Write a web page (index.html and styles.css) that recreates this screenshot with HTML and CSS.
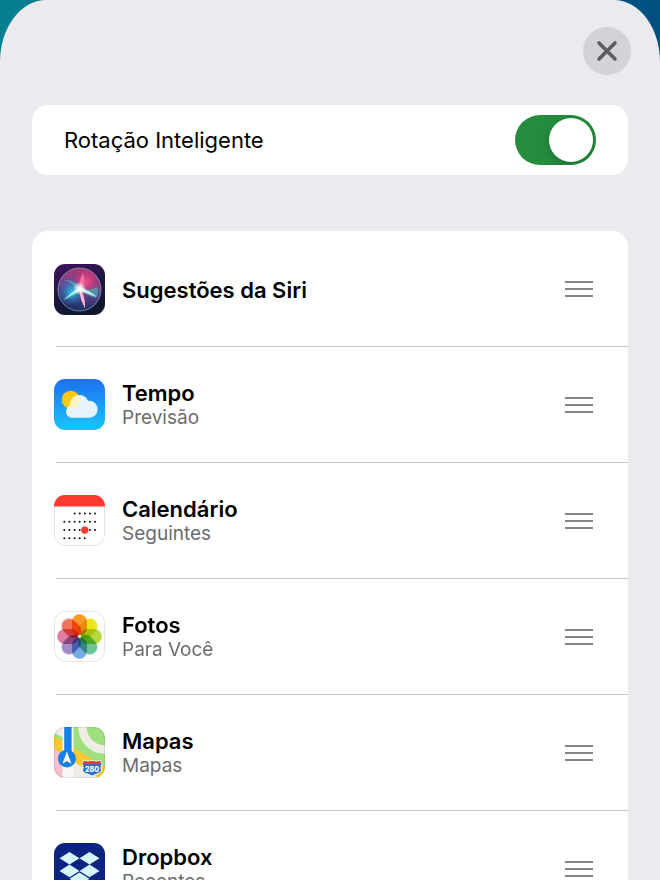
FILE: index.html
```html
<!DOCTYPE html>
<html lang="pt">

<head>
  <meta charset="UTF-8">
  <meta name="viewport" content="width=device-width, initial-scale=1.0">
  <title>Rotação Inteligente</title>
  <link rel="stylesheet" href="styles.css">
</head>

<body>
  <main class="sheet">
    <header class="sheet-header">
      <button class="close" type="button" aria-label="Fechar">
        <svg width="22" height="22" viewBox="0 0 22 22"><path d="M3 3l16 16M19 3L3 19" fill="none" stroke="#5c5c61" stroke-width="3.6" stroke-linecap="round"/></svg>
      </button>
    </header>

    <div class="card setting">
      <label for="smart-rotate">Rotação Inteligente</label>
      <input class="switch" id="smart-rotate" type="checkbox" role="switch" checked>
    </div>

    <ul class="card widgets">
      <li class="widget">
        <svg class="icon" viewBox="0 0 51 51">
          <defs>
            <linearGradient id="siri-bg" x1="0" y1="0" x2=".4" y2="1"><stop offset="0" stop-color="#43115f"/><stop offset=".5" stop-color="#221747"/><stop offset="1" stop-color="#10182f"/></linearGradient>
            <linearGradient id="siri-orb" x1=".6" y1="0" x2=".4" y2="1"><stop offset="0" stop-color="#b0386f"/><stop offset=".45" stop-color="#6e4592"/><stop offset="1" stop-color="#132f60"/></linearGradient>
            <radialGradient id="siri-blue"><stop offset="0" stop-color="#28c8e8"/><stop offset="1" stop-color="#1878c8" stop-opacity="0"/></radialGradient>
            <radialGradient id="siri-pink"><stop offset="0" stop-color="#f0508a"/><stop offset="1" stop-color="#e8286c" stop-opacity="0"/></radialGradient>
            <radialGradient id="siri-glow"><stop offset="0" stop-color="#fff"/><stop offset=".3" stop-color="#fff" stop-opacity=".8"/><stop offset="1" stop-color="#fff" stop-opacity="0"/></radialGradient>
          </defs>
          <rect width="51" height="51" rx="11" fill="url(#siri-bg)"/>
          <circle cx="25.5" cy="25.5" r="21.5" fill="url(#siri-orb)"/>
          <circle cx="18" cy="28" r="14" fill="url(#siri-blue)"/>
          <circle cx="32" cy="18" r="14" fill="url(#siri-pink)"/>
          <path d="M10 16Q20 15 27 25Q36 27 43 23Q46 28 42 34Q34 32 26 26Q20 34 9 36Q18 29 22 24Q17 18 10 16z" fill="#38c8b8" opacity=".6"/>
          <path d="M29 9Q32 16 28 25Q32 36 31 45Q27 36 25 26Q25 16 29 9z" fill="#ff77a8" opacity=".8"/>
          <path d="M9 36Q18 28 26 23Q35 26 43 33Q34 30 26 27Q17 31 9 36z" fill="#d8fff8" opacity=".8"/>
          <path d="M25 24Q31 32 31 44Q26 35 25 24z" fill="#ffb8e0"/>
          <circle cx="25.5" cy="24.5" r="7" fill="url(#siri-glow)"/>
          <circle cx="25.5" cy="25.5" r="21.5" fill="none" stroke="#8babc9" stroke-width=".9" opacity=".8"/>
        </svg>
        <div class="text"><h2>Sugestões da Siri</h2></div>
        <button class="handle" type="button" aria-label="Mover Sugestões da Siri"><span></span><span></span><span></span></button>
      </li>

      <li class="widget">
        <svg class="icon" viewBox="0 0 51 51">
          <defs>
            <linearGradient id="sky" x1="0" y1="0" x2="0" y2="1"><stop offset="0" stop-color="#1d70f2"/><stop offset="1" stop-color="#1bc5fa"/></linearGradient>
            <clipPath id="cloud"><circle cx="25.3" cy="25.7" r="9.6"/><circle cx="35.2" cy="30.2" r="8.5"/><circle cx="18" cy="32.7" r="6"/><rect x="18" y="27" width="17.2" height="11.7"/></clipPath>
          </defs>
          <rect width="51" height="51" rx="11" fill="url(#sky)"/>
          <circle cx="16.7" cy="20.7" r="9" fill="#fdcb0b"/>
          <g clip-path="url(#cloud)">
            <rect x="10" y="14" width="35" height="26" fill="#e6f3fe"/>
            <circle cx="16.7" cy="20.7" r="9" fill="#fdf2c0"/>
          </g>
        </svg>
        <div class="text"><h2>Tempo</h2><p>Previsão</p></div>
        <button class="handle" type="button" aria-label="Mover Tempo"><span></span><span></span><span></span></button>
      </li>

      <li class="widget">
        <svg class="icon" viewBox="0 0 51 51">
          <clipPath id="tile"><rect width="51" height="51" rx="11"/></clipPath>
          <rect x=".5" y=".5" width="50" height="50" rx="11" fill="#fff" stroke="#e6e6e8"/>
          <path d="M0 0h51v11.5H0z" fill="#fd3a31" clip-path="url(#tile)"/>
          <g fill="none" stroke="#111" stroke-width="2" stroke-linecap="round" stroke-dasharray="0 5.12">
            <path d="M20.6 18.5h20.6"/>
            <path d="M10.3 26.8h31"/>
            <path d="M10.3 35.1h31"/>
            <path d="M10.3 43.3h20.6"/>
          </g>
          <circle cx="30.8" cy="35.1" r="3.7" fill="#fd3a31"/>
        </svg>
        <div class="text"><h2>Calendário</h2><p>Seguintes</p></div>
        <button class="handle" type="button" aria-label="Mover Calendário"><span></span><span></span><span></span></button>
      </li>

      <li class="widget">
        <svg class="icon" viewBox="0 0 51 51">
          <defs><rect id="petal" x="18" y="3.2" width="15" height="21.6" rx="7.5"/></defs>
          <rect x=".5" y=".5" width="50" height="50" rx="11" fill="#fff" stroke="#e6e6e8"/>
          <g class="petals">
            <use href="#petal" fill="#fb9a26"/>
            <use href="#petal" fill="#ebe51c" transform="rotate(45 25.5 25.5)"/>
            <use href="#petal" fill="#b5d83c" transform="rotate(90 25.5 25.5)"/>
            <use href="#petal" fill="#6cc694" transform="rotate(135 25.5 25.5)"/>
            <use href="#petal" fill="#74ade4" transform="rotate(180 25.5 25.5)"/>
            <use href="#petal" fill="#a18bc8" transform="rotate(225 25.5 25.5)"/>
            <use href="#petal" fill="#dd7fa2" transform="rotate(270 25.5 25.5)"/>
            <use href="#petal" fill="#f0745c" transform="rotate(315 25.5 25.5)"/>
          </g>
          <circle cx="25.5" cy="25.5" r="1.4" fill="#fff"/>
        </svg>
        <div class="text"><h2>Fotos</h2><p>Para Você</p></div>
        <button class="handle" type="button" aria-label="Mover Fotos"><span></span><span></span><span></span></button>
      </li>

      <li class="widget">
        <svg class="icon" viewBox="0 0 51 51">
          <g clip-path="url(#tile)">
            <rect width="51" height="51" fill="#9fe07d"/>
            <circle cx="51" cy="0" r="22.5" fill="none" stroke="#efece5" stroke-width="8.5"/>
            <path d="M0 0h10v11L0 6z" fill="#efece5"/>
            <path d="M0 20l10 6v25H0z" fill="#f8bfd0"/>
            <path d="M17 28l34 21v2H17z" fill="#efece5"/>
            <path d="M0 9l51 31v11h-6L0 22z" fill="#fdc72f"/>
            <path d="M8.5 0h11v51h-11z" fill="#f8f8f6"/>
            <path d="M10.2 0h7.4v30h-7.4z" fill="#1580e8"/>
            <circle cx="12.9" cy="31.5" r="9" fill="#1580e8"/>
            <path d="M12.9 24.5l4.5 12.2-4.5-2.7-4.500 2.700z" fill="#fff"/>
            <path d="M30 33.5q4 1.5 8 0q4 1.5 8 0l2 3q-2 4-.5 7q-1 3-5 3.5l-4.500 2-4.500-2q-4-.5-5-3.500q1.500-3-.5-7z" fill="#2474d2" stroke="#fff" stroke-width=".9"/>
            <path d="M30.200 34q4 1.500 7.800 0q4 1.500 7.800 0l1.400 3.300H28.800z" fill="#df3b3b"/>
            <text class="route" x="38" y="44.800" text-anchor="middle">280</text>
          </g>
          <rect x=".5" y=".5" width="50" height="50" rx="11" fill="none" stroke="#000" stroke-opacity=".08"/>
        </svg>
        <div class="text"><h2>Mapas</h2><p>Mapas</p></div>
        <button class="handle" type="button" aria-label="Mover Mapas"><span></span><span></span><span></span></button>
      </li>

      <li class="widget">
        <svg class="icon" viewBox="0 0 51 51">
          <rect width="51" height="51" rx="11" fill="#0c2481"/>
          <path d="M15.500 9l10 6.300-10 6.300-10-6.300zM35.500 9l10 6.300-10 6.300-10-6.300zM15.500 21.600l10 6.300-10 6.300-10-6.300zM35.500 21.600l10 6.300-10 6.300-10-6.300zM25.500 29.500l10 6.300-10 6.300-10-6.300z" fill="#d6f5ff"/>
        </svg>
        <div class="text"><h2>Dropbox</h2><p>Recentes</p></div>
        <button class="handle" type="button" aria-label="Mover Dropbox"><span></span><span></span><span></span></button>
      </li>
    </ul>
  </main>
</body>

</html>
```

FILE: styles.css
```css
/* Basic Style */
* {
  box-sizing: border-box;
}
body {
  margin: 0;
  background: linear-gradient(90deg, #087f91, #00507f);
  color: #000;
  font-family: Inter, 'Liberation Sans', sans-serif;
  font-size: 22px;
}
button {
  border: 0;
  padding: 0;
  cursor: pointer;
}
h2, p, ul {
  margin: 0;
  padding: 0;
}

/* Sheet */
.sheet {
  height: 100vh;
  overflow-y: auto;
  scrollbar-width: none;
  padding: 0 32px;
  background: #ebeaef;
  border-radius: 46px 46px 0 0 / 62px 62px 0 0;
}
.sheet-header {
  display: flex;
  justify-content: flex-end;
  padding: 27px 0 30px;
  margin-right: -3px;
}
.close {
  display: flex;
  align-items: center;
  justify-content: center;
  width: 48px;
  height: 48px;
  border-radius: 50%;
  background: #d3d2d8;
}
.card {
  background: #fff;
  border-radius: 16px;
}

/* Smart rotate */
.setting {
  display: flex;
  align-items: center;
  justify-content: space-between;
  height: 70px;
  padding: 0 32px;
  margin-bottom: 56px;
}
.switch {
  appearance: none;
  display: flex;
  width: 81px;
  height: 50px;
  margin: 0;
  padding: 3px;
  border-radius: 25px;
  background: #c9c9ce;
  overflow: hidden;
  cursor: pointer;
}
.switch::before {
  content: '';
  width: 44px;
  border-radius: 50%;
  background: #fff;
  box-shadow: 0 3px 8px rgba(0, 0, 0, .2);
}
.switch:checked {
  justify-content: flex-end;
  background: #258c3e;
}

/* Widget list */
.widgets {
  list-style: none;
  padding-left: 24px;
}
.widget {
  display: flex;
  align-items: center;
  min-height: 115px;
  padding-top: 1px;
  padding-right: 35px;
}
.widget + .widget {
  min-height: 116px;
  padding-top: 0;
  border-top: 1px solid #c4c4c6;
}
.icon {
  width: 51px;
  height: 51px;
  margin-left: -2px;
  margin-right: 17px;
}
.text {
  flex: 1;
  padding-top: 1px;
}
.text h2 {
  font-size: 22px;
  font-weight: 600;
  line-height: 26px;
}
.text p {
  color: #6c6c70;
  font-size: 19px;
  line-height: 24px;
}
.handle {
  display: flex;
  flex-direction: column;
  gap: 5px;
  width: 28px;
  background: none;
}
.handle span {
  height: 2px;
  background: #858589;
}

/* Icons */
.petals use {
  mix-blend-mode: multiply;
}
.route {
  fill: #fff;
  font-size: 7px;
  font-weight: 800;
}
```
